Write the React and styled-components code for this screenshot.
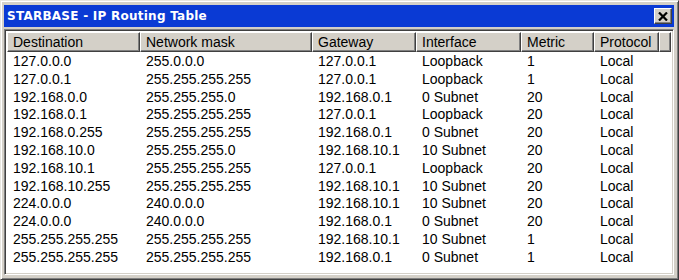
import React from 'react';
import styled, { createGlobalStyle } from 'styled-components';

const GlobalStyle = createGlobalStyle`
    html, body {
        margin: 0;
        padding: 0;
        background: #ffffff;
    }
`;

const Window = styled.div`
    width: 679px;
    height: 280px;
    box-sizing: border-box;
    background: #d4d0c8;
    border: 1px solid;
    border-color: #e8e6e0 #404040 #404040 #e8e6e0;
    box-shadow: inset 1px 1px 0 #ffffff, inset -1px -1px 0 #808080;
    padding: 3px 4px 4px 3px;
    display: flex;
    flex-direction: column;
    font-family: "Liberation Sans", Arial, sans-serif;
`;

const TitleBar = styled.div`
    height: 22px;
    background: #0a3ad4;
    display: flex;
    align-items: center;
    justify-content: space-between;
    padding: 0 2px 0 3px;
    margin-top: 1px;
`;

const Title = styled.span`
    color: #ffffff;
    font-family: "DejaVu Sans", Tahoma, sans-serif;
    font-weight: bold;
    font-size: 12px;
    letter-spacing: 0.25px;
`;

const CloseButton = styled.div`
    width: 18px;
    height: 16px;
    box-sizing: border-box;
    background: #d4d0c8;
    border: 1px solid;
    border-color: #ffffff #404040 #404040 #ffffff;
    box-shadow: inset -1px -1px 0 #808080;
    display: flex;
    align-items: center;
    justify-content: center;
`;

const ListView = styled.div`
    margin-top: 2px;
    flex: 1;
    background: #ffffff;
    border: 1px solid;
    border-color: #808080 #ffffff #ffffff #808080;
    box-shadow: inset 1px 1px 0 #404040, inset -1px -1px 0 #d4d0c8;
    padding: 2px;
    overflow: hidden;
`;

const Grid = styled.div`
    display: grid;
    grid-template-columns: 133px 172px 104px 105px 73px 65px 1fr;
`;

const HeaderCell = styled.div`
    height: 20px;
    box-sizing: border-box;
    background: #d4d0c8;
    border: 1px solid;
    border-color: #ffffff #404040 #404040 #ffffff;
    box-shadow: inset -1px -1px 0 #808080;
    padding-left: 5px;
    font-size: 14px;
    line-height: 18px;
    color: #000000;
    white-space: nowrap;
    overflow: hidden;
`;

const Cell = styled.div`
    height: 17.8px;
    line-height: 17.8px;
    padding-left: 6px;
    font-size: 14px;
    color: #000000;
    white-space: nowrap;
`;

const Spacer = styled.div`
    height: 1px;
    grid-column: 1 / -1;
`;

const columns = ['Destination', 'Network mask', 'Gateway', 'Interface', 'Metric', 'Protocol'];

const routes = [
    ['127.0.0.0', '255.0.0.0', '127.0.0.1', 'Loopback', '1', 'Local'],
    ['127.0.0.1', '255.255.255.255', '127.0.0.1', 'Loopback', '1', 'Local'],
    ['192.168.0.0', '255.255.255.0', '192.168.0.1', '0 Subnet', '20', 'Local'],
    ['192.168.0.1', '255.255.255.255', '127.0.0.1', 'Loopback', '20', 'Local'],
    ['192.168.0.255', '255.255.255.255', '192.168.0.1', '0 Subnet', '20', 'Local'],
    ['192.168.10.0', '255.255.255.0', '192.168.10.1', '10 Subnet', '20', 'Local'],
    ['192.168.10.1', '255.255.255.255', '127.0.0.1', 'Loopback', '20', 'Local'],
    ['192.168.10.255', '255.255.255.255', '192.168.10.1', '10 Subnet', '20', 'Local'],
    ['224.0.0.0', '240.0.0.0', '192.168.10.1', '10 Subnet', '20', 'Local'],
    ['224.0.0.0', '240.0.0.0', '192.168.0.1', '0 Subnet', '20', 'Local'],
    ['255.255.255.255', '255.255.255.255', '192.168.10.1', '10 Subnet', '1', 'Local'],
    ['255.255.255.255', '255.255.255.255', '192.168.0.1', '0 Subnet', '1', 'Local'],
];

const CloseIcon = () => (
    <svg width="10" height="9" viewBox="0 0 10 9">
        <path d="M1 0.5 L9 8.5 M9 0.5 L1 8.5" stroke="#000" strokeWidth="2.2" />
    </svg>
);

export default function App() {
    return (
        <>
            <GlobalStyle />
            <Window>
                <TitleBar>
                    <Title>STARBASE - IP Routing Table</Title>
                    <CloseButton><CloseIcon /></CloseButton>
                </TitleBar>
                <ListView>
                    <Grid>
                        {columns.map(c => <HeaderCell key={c}>{c}</HeaderCell>)}
                        <HeaderCell />
                        <Spacer />
                        {routes.map((row, i) => (
                            <React.Fragment key={i}>
                                {row.map((v, j) => <Cell key={j}>{v}</Cell>)}
                                <Cell />
                            </React.Fragment>
                        ))}
                    </Grid>
                </ListView>
            </Window>
        </>
    );
}
